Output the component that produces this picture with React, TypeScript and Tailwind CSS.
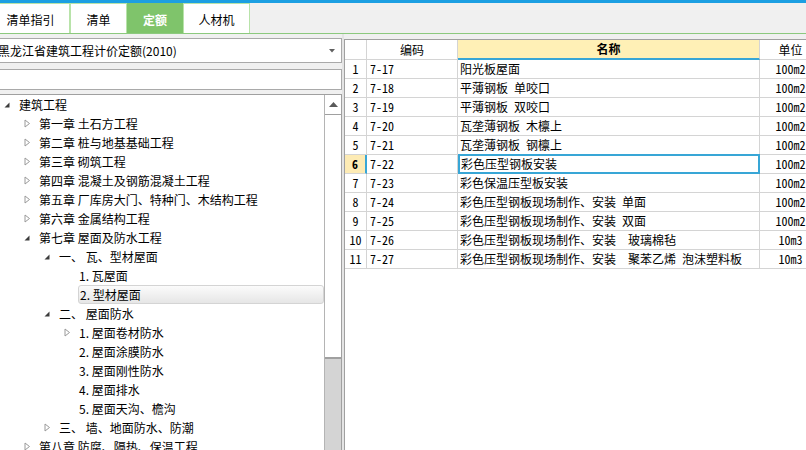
import React from "react";

const tabs = [
  { label: "清单指引", w: "w-[79px] -ml-[9px]", active: false },
  { label: "清单", w: "w-[57px]", active: false },
  { label: "定额", w: "w-[56px]", active: true },
  { label: "人材机", w: "w-[67px]", active: false },
];

type Node = { text: string; level: number; arrow: "open" | "closed" | "none"; selected?: boolean };

const tree: Node[] = [
  { text: "建筑工程", level: 0, arrow: "open" },
  { text: "第一章 土石方工程", level: 1, arrow: "closed" },
  { text: "第二章 桩与地基基础工程", level: 1, arrow: "closed" },
  { text: "第三章 砌筑工程", level: 1, arrow: "closed" },
  { text: "第四章 混凝土及钢筋混凝土工程", level: 1, arrow: "closed" },
  { text: "第五章 厂库房大门、特种门、木结构工程", level: 1, arrow: "closed" },
  { text: "第六章 金属结构工程", level: 1, arrow: "closed" },
  { text: "第七章 屋面及防水工程", level: 1, arrow: "open" },
  { text: "一、 瓦、型材屋面", level: 2, arrow: "open" },
  { text: "1. 瓦屋面", level: 3, arrow: "none" },
  { text: "2. 型材屋面", level: 3, arrow: "none", selected: true },
  { text: "二、 屋面防水", level: 2, arrow: "open" },
  { text: "1. 屋面卷材防水", level: 3, arrow: "closed" },
  { text: "2. 屋面涂膜防水", level: 3, arrow: "none" },
  { text: "3. 屋面刚性防水", level: 3, arrow: "none" },
  { text: "4. 屋面排水", level: 3, arrow: "none" },
  { text: "5. 屋面天沟、檐沟", level: 3, arrow: "none" },
  { text: "三、 墙、地面防水、防潮", level: 2, arrow: "closed" },
  { text: "第八章 防腐、隔热、保温工程", level: 1, arrow: "closed" },
];

const rows = [
  ["7-17", "阳光板屋面", "100m2"],
  ["7-18", "平薄钢板 单咬口", "100m2"],
  ["7-19", "平薄钢板 双咬口", "100m2"],
  ["7-20", "瓦垄薄钢板 木檩上", "100m2"],
  ["7-21", "瓦垄薄钢板 钢檩上", "100m2"],
  ["7-22", "彩色压型钢板安装", "100m2"],
  ["7-23", "彩色保温压型板安装", "100m2"],
  ["7-24", "彩色压型钢板现场制作、安装 单面", "100m2"],
  ["7-25", "彩色压型钢板现场制作、安装 双面", "100m2"],
  ["7-26", "彩色压型钢板现场制作、安装  玻璃棉毡", "10m3"],
  ["7-27", "彩色压型钢板现场制作、安装  聚苯乙烯 泡沫塑料板", "10m3"],
];

const indents = ["pl-0", "pl-[20px]", "pl-[40px]", "pl-[60px]"];

function Arrow({ kind }: { kind: Node["arrow"] }) {
  if (kind === "open")
    return (
      <svg width="6" height="6" viewBox="0 0 6 6">
        <path d="M5.5 0.5 L5.5 5.5 L0.5 5.5 Z" fill="#3c3c3c" />
      </svg>
    );
  if (kind === "closed")
    return (
      <svg width="7" height="9" viewBox="0 0 7 9" className="ml-[2px]">
        <path d="M1 1 L5.5 4.5 L1 8 Z" fill="none" stroke="#9a9a9a" />
      </svg>
    );
  return null;
}

export default function App() {
  return (
    <div className="w-[806px] h-[450px] overflow-hidden bg-[#f0f0f0] flex flex-col font-['Noto_Sans_CJK_SC',sans-serif] text-[12px] text-black">
      <div className="h-[3px] bg-[#1c9fe2]" />
      <div className="h-[31px] flex border-b border-[#8cc97e]">
        {tabs.map((t) => (
          <div
            key={t.label}
            className={`${t.w} h-[30px] flex items-center justify-center pt-[2px] border-x border-t ${
              t.active ? "bg-[#7fc46b] border-[#7fc46b] text-white font-bold" : "bg-white border-[#b8e3a9]"
            }`}
          >
            {t.label}
          </div>
        ))}
      </div>

      <div className="flex flex-1 min-h-0">
        {/* left panel */}
        <div className="w-[342px] flex flex-col">
          <div className="mt-[4px] h-[25px] -ml-[2px] bg-white border border-[#a9a9a9] flex items-center justify-between pr-[6px]">
            <span className="-ml-[1px]">黑龙江省建筑工程计价定额(2010)</span>
            <svg width="6" height="4" viewBox="0 0 6 4">
              <path d="M0 0 L6 0 L3 3.5 Z" fill="#606060" />
            </svg>
          </div>
          <div className="mt-[6px] h-[21px] -ml-[2px] bg-white border border-[#a9a9a9]" />
          <div className="mt-[4px] flex-1 min-h-0 bg-white border-t border-r border-[#a0a0a0] flex">
            <div className="flex-1 overflow-hidden">
              {tree.map((n) => (
                <div key={n.text} className={`h-[19px] flex items-center ${indents[n.level]}`}>
                  <div className="w-[13px] flex justify-center items-center shrink-0">
                    <Arrow kind={n.arrow} />
                  </div>
                  <div
                    className={`ml-[5px] flex-1 h-[19px] flex items-center whitespace-pre pl-[1px] ${
                      n.selected
                        ? "rounded-[3px] border border-[#d4d4d4] bg-gradient-to-b from-[#fbfbfb] to-[#e6e6e6]"
                        : ""
                    }`}
                  >
                    {n.text}
                  </div>
                </div>
              ))}
            </div>
            <div className="w-[17px] border-l border-[#b4b4b4] flex flex-col">
              <div className="h-[19px] bg-white flex items-center justify-center">
                <svg width="9" height="5" viewBox="0 0 9 5">
                  <path d="M0 5 L4.5 0 L9 5 Z" fill="#5a5a5a" />
                </svg>
              </div>
              <div className="h-[245px] bg-white border-t border-b-2 border-[#a0a0a0]" />
              <div className="flex-1 bg-[#d4d4d4]" />
            </div>
          </div>
        </div>

        {/* splitter */}
        <div className="w-[2px] bg-[#e4e4e4]" />

        {/* right panel */}
        <div className="flex-1 min-w-0 pt-[5px] flex flex-col">
          <div className="flex-1 bg-white border-l border-t border-[#a0a0a0] overflow-hidden font-['Noto_Sans_Mono_CJK_SC','Noto_Sans_CJK_SC',monospace]">
            <div className="flex h-[20px] w-[600px]">
              <div className="w-[22px] shrink-0 border-r border-b border-[#d4d4d4]" />
              <div className="w-[91px] shrink-0 border-r border-b border-[#d4d4d4] flex items-center justify-center">
                编码
              </div>
              <div className="w-[302px] shrink-0 border-r border-[#d4d4d4] border-b-2 border-b-[#38a6d6] bg-[#fff0b6] flex items-center justify-center font-bold">
                名称
              </div>
              <div className="w-[62px] shrink-0 border-r border-b border-[#d4d4d4] flex items-center justify-center">
                单位
              </div>
            </div>
            {rows.map((r, i) => {
              const sel = i === 5;
              return (
                <div key={r[0]} className="flex h-[19px] w-[600px]">
                  <div
                    className={`w-[22px] shrink-0 border-r border-b border-[#d4d4d4] flex items-center justify-center ${
                      sel ? "bg-[#fdebb4] font-bold border-r-[#38a6d6] border-r-2" : ""
                    }`}
                  >
                    {i + 1}
                  </div>
                  <div className="w-[91px] shrink-0 border-r border-b border-[#d4d4d4] flex items-center pl-[3px]">
                    {r[0]}
                  </div>
                  <div
                    className={`w-[302px] shrink-0 flex items-center whitespace-pre ${
                      sel
                        ? "border-2 border-[#38a6d6] -mt-[1px] h-[20px] pl-[1px]"
                        : "border-r border-b border-[#d4d4d4] pl-[2px]"
                    }`}
                  >
                    {r[1]}
                  </div>
                  <div className="w-[62px] shrink-0 border-r border-b border-[#d4d4d4] flex items-center justify-center">
                    {r[2]}
                  </div>
                </div>
              );
            })}
          </div>
        </div>
      </div>
    </div>
  );
}
